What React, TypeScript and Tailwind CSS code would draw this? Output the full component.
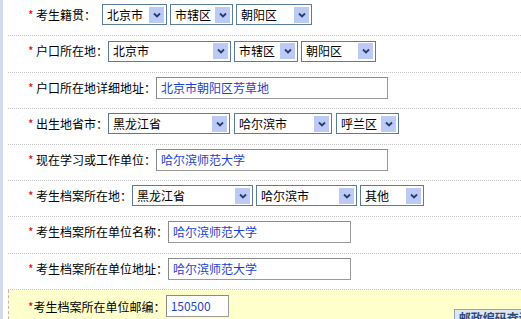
const FONT = "font-['SimSun','Noto_Sans_CJK_SC','Noto_Sans',sans-serif]";

function Sel({ text, w }: { text: string; w: string }) {
    return (
        <div
            className={`flex h-[21px] shrink-0 items-center justify-between border border-[#5b7d9c] bg-white pl-[4px] pr-[2px] ${w}`}
        >
            <span className="text-[12px] leading-none text-black">{text}</span>
            <span className="flex h-[16px] w-[15px] items-center justify-center bg-[#bccbf6]">
                <svg width="8" height="6" viewBox="0 0 8 6">
                    <path d="M1 1.5 L4 4.5 L7 1.5" fill="none" stroke="#2b3a6e" strokeWidth="1.8" />
                </svg>
            </span>
        </div>
    );
}

function Inp({ value, w }: { value: string; w: string }) {
    return (
        <div
            className={`flex h-[22px] shrink-0 items-center border border-[#9a9a9a] border-t-[#8a8a8a] border-l-[#8a8a8a] bg-white pl-[4px] ${w}`}
        >
            <span className="text-[12px] leading-none text-[#1d44cf]">{value}</span>
        </div>
    );
}

function Row({
    label,
    h,
    children,
}: {
    label: string;
    h: string;
    children: React.ReactNode;
}) {
    return (
        <div className={`flex shrink-0 items-center border-b border-dotted border-[#c4c4c4] pb-[6px] pl-[20px] ${h}`}>
            <span className="w-[8px] text-[12px] leading-none text-[#e00000]">*</span>
            <span className="text-[12px] leading-none whitespace-nowrap text-black">{label}</span>
            {children}
        </div>
    );
}

export default function App() {
    return (
        <div className={`flex h-[319px] w-[521px] overflow-hidden bg-white ${FONT}`}>
            <div className="w-[3px] shrink-0 bg-[#d3dbea]" />
            <div className="w-[5px] shrink-0" />
            <div className="flex min-w-0 flex-1 flex-col">
                <Row label="考生籍贯：" h="h-[36px]">
                    <div className="ml-[6px] flex gap-[3px]">
                        <Sel text="北京市" w="w-[65px]" />
                        <Sel text="市辖区" w="w-[63px]" />
                        <Sel text="朝阳区" w="w-[76px]" />
                    </div>
                </Row>
                <Row label="户口所在地：" h="h-[37px]">
                    <div className="flex gap-[3px]">
                        <Sel text="北京市" w="w-[123px]" />
                        <Sel text="市辖区" w="w-[64px]" />
                        <Sel text="朝阳区" w="w-[75px]" />
                    </div>
                </Row>
                <Row label="户口所在地详细地址：" h="h-[36px]">
                    <Inp value="北京市朝阳区芳草地" w="w-[232px]" />
                </Row>
                <Row label="出生地省市：" h="h-[36px]">
                    <div className="flex gap-[4px]">
                        <Sel text="黑龙江省" w="w-[122px]" />
                        <Sel text="哈尔滨市" w="w-[98px]" />
                        <Sel text="呼兰区" w="w-[63px]" />
                    </div>
                </Row>
                <Row label="现在学习或工作单位：" h="h-[36px]">
                    <Inp value="哈尔滨师范大学" w="w-[232px]" />
                </Row>
                <Row label="考生档案所在地：" h="h-[36px]">
                    <div className="flex gap-[3px]">
                        <Sel text="黑龙江省" w="w-[121px]" />
                        <Sel text="哈尔滨市" w="w-[101px]" />
                        <Sel text="其他" w="w-[64px]" />
                    </div>
                </Row>
                <Row label="考生档案所在单位名称：" h="h-[37px]">
                    <Inp value="哈尔滨师范大学" w="w-[183px]" />
                </Row>
                <Row label="考生档案所在单位地址：" h="h-[36px]">
                    <Inp value="哈尔滨师范大学" w="w-[183px]" />
                </Row>
                <div className="flex h-[40px] shrink-0 items-start overflow-hidden border-l border-dashed border-[#b8b8b8] bg-[#ffffcc] pl-[19px]">
                    <span className="mt-[11px] w-[8px] text-[12px] leading-none text-[#e00000]">*</span>
                    <span className="mt-[11px] text-[12px] leading-none whitespace-nowrap text-black">
                        考生档案所在单位邮编：
                    </span>
                    <div className="mt-[5px]">
                        <Inp value="150500" w="w-[63px]" />
                    </div>
                    <div className="ml-[225px] mt-[19px] flex h-[20px] w-[80px] shrink-0 items-start border border-[#8fa6bf] bg-[#dfe7f2] pl-[4px] pt-[2px]">
                        <span className="text-[12px] leading-none font-bold whitespace-nowrap text-[#2b4a7a]">
                            邮政编码查询
                        </span>
                    </div>
                </div>
            </div>
        </div>
    );
}
